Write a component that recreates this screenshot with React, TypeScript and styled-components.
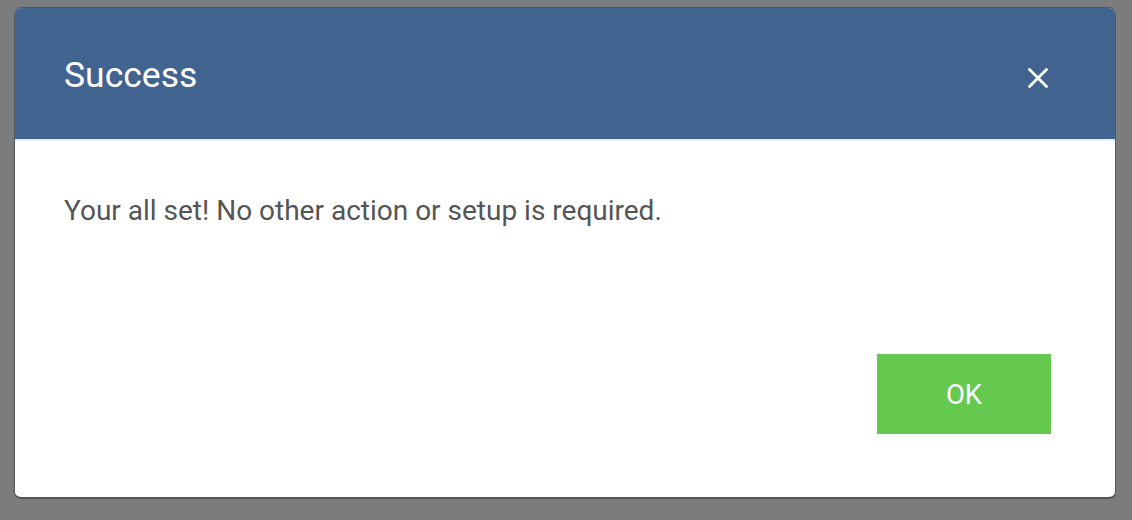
import React from "react";
import styled, { createGlobalStyle } from "styled-components";

const GlobalStyle = createGlobalStyle`
  html, body {
    margin: 0;
    padding: 0;
    background: #7b7c7e;
  }
  body {
    font-family: Roboto, "Liberation Sans", Arial, sans-serif;
  }
`;

const Backdrop = styled.div`
  width: 1132px;
  height: 520px;
  box-sizing: border-box;
  padding: 7px 16px 0 14px;
  background: #7b7c7e;
`;

const Dialog = styled.div`
  box-sizing: border-box;
  width: 1102px;
  height: 492px;
  display: flex;
  flex-direction: column;
  background: #ffffff;
  border: 1px solid #555658;
  border-bottom-width: 2px;
  border-radius: 7px;
  overflow: hidden;
`;

const Header = styled.div`
  height: 131px;
  flex: none;
  display: flex;
  align-items: center;
  justify-content: space-between;
  padding: 0 67px 0 49px;
  background: #41638f;
  border-bottom: 2px solid #e8eef5;
`;

const Title = styled.h1`
  margin: 0;
  font-family: Roboto, "Liberation Sans", Arial, sans-serif;
  font-size: 35.5px;
  font-weight: 400;
  color: #ffffff;
  line-height: 1;
  padding-top: 4px;
`;

const CloseButton = styled.button`
  width: 20px;
  height: 20px;
  padding: 0;
  margin-top: 8px;
  border: none;
  background: transparent;
  display: flex;
  align-items: center;
  justify-content: center;
  cursor: pointer;
`;

const Body = styled.div`
  flex: 1;
  display: flex;
  flex-direction: column;
  padding: 55px 64px 63px 49px;
`;

const Message = styled.p`
  margin: 0;
  flex: 1;
  font-family: Roboto, "Liberation Sans", Arial, sans-serif;
  font-size: 28px;
  line-height: 30px;
  color: #555555;
`;

const Footer = styled.div`
  display: flex;
  justify-content: flex-end;
`;

const OkButton = styled.button`
  width: 174px;
  height: 80px;
  border: none;
  border-radius: 0;
  background: #66c94f;
  color: #ffffff;
  font-family: Roboto, "Liberation Sans", Arial, sans-serif;
  font-size: 27.5px;
  font-weight: 400;
  cursor: pointer;
`;

export default function App() {
  return (
    <>
      <GlobalStyle />
      <Backdrop>
        <Dialog>
          <Header>
            <Title>Success</Title>
            <CloseButton aria-label="Close">
              <svg width="20" height="20" viewBox="0 0 20 20">
                <path
                  d="M1.5 1.5 L18.5 18.5 M18.5 1.5 L1.5 18.5"
                  stroke="#ffffff"
                  strokeWidth="2.8"
                  strokeLinecap="round"
                />
              </svg>
            </CloseButton>
          </Header>
          <Body>
            <Message>Your all set! No other action or setup is required.</Message>
            <Footer>
              <OkButton>OK</OkButton>
            </Footer>
          </Body>
        </Dialog>
      </Backdrop>
    </>
  );
}
